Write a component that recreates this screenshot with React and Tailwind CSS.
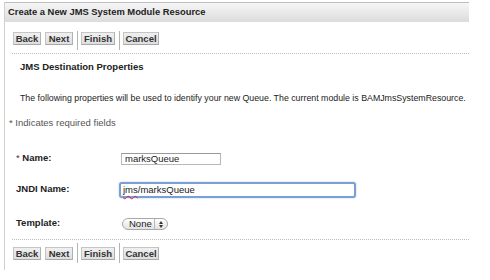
import React from "react";

function Btn({ w, children }) {
  return (
    <div
      className={`${w} h-[13px] flex items-center justify-center bg-gradient-to-b from-[#f0f0f0] to-[#dedede] border border-[#c4c4c4] border-b-[#a8a8a8] border-r-[#b0b0b0] text-[9.5px] font-bold text-[#333] leading-none`}
    >
      {children}
    </div>
  );
}

function Sep() {
  return <div className="w-[2px] h-full bg-[#b4b4b4] border-r border-white" />;
}

function ButtonRow({ top, btnTop }) {
  return (
    <div className={`flex items-start pl-[8px] ${top}`}>
      <div className={`flex gap-[4px] ${btnTop}`}>
        <Btn w="w-[28px]">Back</Btn>
        <Btn w="w-[28px]">Next</Btn>
      </div>
      <div className="ml-[4px] self-stretch">
        <Sep />
      </div>
      <div className={`ml-[2px] ${btnTop}`}>
        <Btn w="w-[34px]">Finish</Btn>
      </div>
      <div className="ml-[4px] self-stretch">
        <Sep />
      </div>
      <div className={`ml-[2px] ${btnTop}`}>
        <Btn w="w-[36px]">Cancel</Btn>
      </div>
    </div>
  );
}

export default function App() {
  return (
    <div className="w-[490px] h-[280px] bg-white pt-[2px] pl-[4px] font-['Liberation_Sans',Arial,sans-serif] text-[#222] overflow-hidden">
      <div className="w-[465px] h-[268px] border-l border-[#d0d0d0] flex flex-col">
        <div className="h-[20px] border-t border-[#bdbdbd] bg-gradient-to-b from-[#f6f6f6] to-[#dcdcdc] pl-[3px] flex items-center text-[9.4px] font-bold text-[#222]">
          Create a New JMS System Module Resource
        </div>

        <div className="mt-[9px] h-[19px] flex">
          <ButtonRow top="h-[19px]" btnTop="mt-[1px]" />
        </div>

        <div className="mt-[3px] ml-[7px] border-t border-dotted border-[#bdbdbd]" />

        <div className="mt-[7px] pl-[15px] h-[12px] leading-[12px] text-[9.5px] font-bold">
          JMS Destination Properties
        </div>

        <div className="mt-[19px] pl-[15px] h-[12px] leading-[12px] text-[8.8px] whitespace-nowrap">
          The following properties will be used to identify your new Queue. The current module is BAMJmsSystemResource.
        </div>

        <div className="mt-[13px] pl-[4px] h-[12px] leading-[12px] text-[9.5px] text-[#555] whitespace-nowrap">
          * Indicates required fields
        </div>

        <div className="mt-[22px] h-[16px] flex items-center">
          <div className="w-[116px] pl-[11px] pb-[3px] text-[9.5px] font-bold leading-none">
            <span className="font-normal text-[#444]">*</span> Name:
          </div>
          <div className="w-[100px] h-[12px] border border-[#b8b8b8] border-t-[#9a9a9a] bg-white flex items-center pl-[3px] text-[9.5px] leading-none">
            marksQueue
          </div>
        </div>

        <div className="mt-[15px] h-[16px] flex items-center">
          <div className="w-[114px] pl-[11px] pb-[3px] text-[9.5px] font-bold leading-none">
            JNDI Name:
          </div>
          <div className="w-[237px] h-[16px] border-2 border-[#7b9fd4] rounded-[3px] shadow-[0_0_2px_#a8c4ec] bg-white flex items-center pl-[2px] text-[9.5px] leading-none">
            <span className="underline decoration-wavy decoration-[#d23] decoration-1 underline-offset-2">jms</span>
            /marksQueue
          </div>
        </div>

        <div className="mt-[18px] h-[16px] flex items-center">
          <div className="w-[117px] pl-[11px] pb-[3px] text-[9.5px] font-bold leading-none">
            Template:
          </div>
          <div className="w-[46px] h-[12px] rounded-full border border-[#a8a8a8] bg-gradient-to-b from-[#ffffff] to-[#e2e2e2] flex items-center text-[9.5px] leading-none">
            <span className="pl-[6px] w-[31px]">None</span>
            <span className="h-full border-l border-[#b8b8b8]" />
            <span className="flex-1 flex flex-col items-center justify-center gap-[1px]">
              <span className="w-0 h-0 border-l-[2px] border-r-[2px] border-b-[3px] border-l-transparent border-r-transparent border-b-[#333]" />
              <span className="w-0 h-0 border-l-[2px] border-r-[2px] border-t-[3px] border-l-transparent border-r-transparent border-t-[#333]" />
            </span>
          </div>
        </div>

        <div className="mt-[7px] ml-[7px] border-t border-dotted border-[#bdbdbd]" />

        <div className="mt-[3px] h-[20px] flex">
          <ButtonRow top="h-[20px]" btnTop="mt-[4px]" />
        </div>
      </div>
    </div>
  );
}
